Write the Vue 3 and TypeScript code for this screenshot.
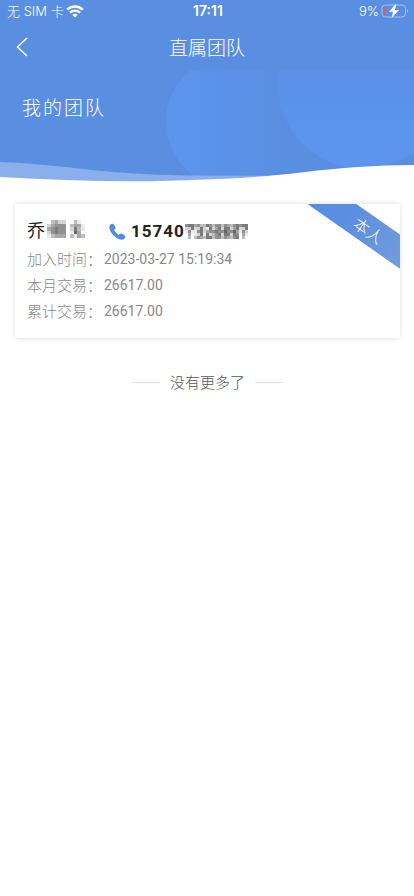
<script setup lang="ts">
interface Row {
  label: string
  value: string
}

interface Cell {
  x: number
  y: number
  fill: string
}

const rows: Row[] = [
  { label: '加入时间：', value: '2023-03-27 15:19:34' },
  { label: '本月交易：', value: '26617.00' },
  { label: '累计交易：', value: '26617.00' },
]

// Each character is the darkness of one mosaic cell, 0 (white) to 9 (dark).
const nameMask: string[] = [
  '0342200310',
  '2455503441',
  '4565502631',
  '2565501740',
  '1344403143',
]

const phoneMask: string[] = [
  '5664533653553543565660',
  '2262262162462662462260',
  '1511562455655755741520',
  '0401261623562662650410',
  '0303543663553543560300',
]

function toCells(mask: string[], size: number): Cell[] {
  return mask.flatMap((line, y) =>
    [...line].map((level, x) => {
      const tone = 255 - Number(level) * 22
      return { x: x * size, y: y * size, fill: `rgb(${tone}, ${tone}, ${tone})` }
    }),
  )
}

const nameCells = toCells(nameMask, 4)
const phoneCells = toCells(phoneMask, 3)
</script>

<template>
  <div class="page">
    <header class="hero">
      <svg class="backdrop" viewBox="0 0 414 182" preserveAspectRatio="none" aria-hidden="true">
        <defs>
          <linearGradient id="fade" x1="0" y1="0" x2="1" y2="0">
            <stop offset="0" stop-color="#5d95ed" />
            <stop offset="0.35" stop-color="#5c93ea" />
            <stop offset="0.9" stop-color="#598ee2" />
          </linearGradient>
          <linearGradient id="drop" x1="0" y1="0" x2="0" y2="1">
            <stop offset="0.4" stop-color="#5b91e8" />
            <stop offset="1" stop-color="#5d95ed" />
          </linearGradient>
          <clipPath id="banner"><rect x="0" y="70" width="414" height="112" /></clipPath>
        </defs>
        <rect width="414" height="182" fill="#598ee1" />
        <g clip-path="url(#banner)">
          <circle cx="232" cy="122" r="66" fill="url(#fade)" />
          <circle cx="363" cy="84" r="85" fill="url(#drop)" />
        </g>
        <path d="M0 162C65 164 100 175 195 175.500C235 176 260 176 285 175L285 182H0Z" fill="#8aafeb" />
        <path d="M0 177C70 181 135 183 205 179.500C245 178 275 176 305 172C340 168 375 165 414 165V183H0Z" fill="#fff" />
      </svg>

      <div class="status">
        <div class="carrier">
          <span>无 SIM 卡</span>
          <svg width="18" height="13" viewBox="0 0 18 13" aria-hidden="true">
            <g fill="none" stroke="#fff" stroke-width="2.500">
              <path d="M1.200 4.700C5.600 .5 12.400 .5 16.800 4.700" />
              <path d="M4 7.700C6.900 5 11.100 5 14 7.700" />
            </g>
            <path d="M6.300 9.800C7.800 8.400 10.200 8.400 11.700 9.800L9 12.600Z" fill="#fff" />
          </svg>
        </div>
        <time class="clock">17:11</time>
        <div class="power">
          <span>9%</span>
          <svg width="28" height="14" viewBox="0 0 28 14" aria-hidden="true">
            <rect x="1" y="1" width="23.500" height="12" rx="3.500" fill="none" stroke="#a5c3f1" />
            <path d="M26 5C27.300 5.500 27.300 8.500 26 9Z" fill="#a5c3f1" />
            <rect x="2.500" y="3" width="2" height="8" rx="1" fill="#e8525d" />
            <path d="M14.500 .3L8 7.800H12L10.700 13.700L18 6H13.800L15.500 .3Z" fill="#fff" />
          </svg>
        </div>
      </div>

      <nav class="bar">
        <button class="back" type="button" aria-label="返回">
          <svg width="12" height="20" viewBox="0 0 12 20" aria-hidden="true">
            <path d="M11 1L1.500 10L11 19" fill="none" stroke="#fff" stroke-width="1.500" />
          </svg>
        </button>
        <h1 class="title">直属团队</h1>
      </nav>

      <h2 class="heading">我的团队</h2>
    </header>

    <main class="content">
      <article class="card">
        <div class="ribbon">本人</div>
        <div class="person">
          <span class="name">乔</span>
          <svg class="name-mask" width="38" height="18" viewBox="0 0 40 20" preserveAspectRatio="none" shape-rendering="crispEdges" aria-hidden="true">
            <rect v-for="(c, i) in nameCells" :key="i" :x="c.x" :y="c.y" width="4" height="4" :fill="c.fill" />
          </svg>
          <svg class="handset" width="17" height="17" viewBox="0 0 17 17" aria-hidden="true">
            <path d="M1.200 1.700C2.500 .4 4.100 .3 4.900 1.500L6.300 4C6.800 5 6.500 5.700 5.700 6.400C5.100 7 5.300 7.600 6 8.500L8.500 11C9.400 11.800 10 11.900 10.600 11.300C11.300 10.500 12 10.200 13 10.700L15.500 12.200C16.700 13 16.600 14.400 15.300 15.700C13.700 17.200 11.600 16.900 9.200 15.700C5.500 13.700 3.100 11.200 1.300 7.900C0 5.300-.2 3.200 1.200 1.700Z" fill="#558be0" />
          </svg>
          <a class="phone" href="tel:15740">15740</a>
          <svg class="phone-mask" width="66" height="15" viewBox="0 0 66 15" shape-rendering="crispEdges" aria-hidden="true">
            <rect v-for="(c, i) in phoneCells" :key="i" :x="c.x" :y="c.y" width="3" height="3" :fill="c.fill" />
          </svg>
        </div>
        <dl class="details">
          <div v-for="row in rows" :key="row.label" class="detail">
            <dt>{{ row.label }}</dt>
            <dd>{{ row.value }}</dd>
          </div>
        </dl>
      </article>

      <p class="end">没有更多了</p>
    </main>
  </div>
</template>

<style>
body {
  background: #fff;
}
</style>

<style scoped>
.page {
  min-height: 100vh;
  background: #fff;
  font-family: "Noto Sans CJK SC", sans-serif;
  font-weight: 300;
}

.hero {
  position: relative;
  padding-bottom: 61px;
  color: #fff;
}

.backdrop {
  position: absolute;
  inset: 0;
  width: 100%;
  height: 100%;
}

.status {
  position: relative;
  display: grid;
  grid-template-columns: 1fr auto 1fr;
  align-items: center;
  height: 22px;
  padding: 0 5px 0 7px;
  font-family: Inter, "Noto Sans CJK SC", sans-serif;
  font-size: 13px;
  font-weight: 300;
  line-height: 22px;
}

.carrier,
.power {
  display: flex;
  align-items: center;
  gap: 2px;
}

.power {
  justify-content: flex-end;
}

.clock {
  font-size: 14px;
  font-weight: 600;
}

.bar {
  position: relative;
  display: grid;
  grid-template-columns: 44px 1fr 44px;
  align-items: center;
  height: 49px;
}

.back {
  display: flex;
  align-items: center;
  justify-content: center;
  height: 44px;
  padding: 0;
  border: 0;
  background: none;
}

.title {
  margin: 0;
  font-size: 19px;
  font-weight: 300;
  line-height: 28px;
  text-align: center;
}

.heading {
  position: relative;
  margin: 22px 22px 0;
  font-size: 19px;
  font-weight: 300;
  line-height: 28px;
  letter-spacing: 2px;
}

.content {
  padding: 22px 14px 0 15px;
}

.card {
  position: relative;
  overflow: hidden;
  padding: 14px 12px 15px;
  background: #fff;
  box-shadow: 0 0 5px rgba(0, 0, 0, 0.14);
}

.ribbon {
  position: absolute;
  top: 12px;
  right: -39px;
  width: 140px;
  background: linear-gradient(90deg, #598ee1 30%, #7ba0d8);
  color: #fff;
  font-size: 16px;
  line-height: 28px;
  text-align: center;
  transform: rotate(35deg);
}

.person {
  display: flex;
  align-items: center;
  height: 26px;
  color: #222;
}

.name {
  padding-bottom: 4px;
  font-size: 18px;
  font-weight: 400;
  line-height: 24px;
}

.name-mask {
  margin: 0 0 4px 2px;
}

.handset {
  margin-left: 24px;
}

.phone {
  margin-left: 5px;
  color: #222;
  font-family: Roboto, sans-serif;
  font-size: 17px;
  font-weight: 700;
  line-height: 24px;
  letter-spacing: 1px;
  text-decoration: none;
}

.details {
  margin: 1px 0 0;
  color: #888;
}

.detail {
  display: flex;
  align-items: center;
  height: 26px;
}

.detail dt {
  width: 77px;
  font-size: 15px;
  white-space: nowrap;
}

.detail dd {
  margin: 0;
  padding-top: 2px;
  font-family: Roboto, sans-serif;
  font-size: 14px;
  font-weight: 400;
}

.end {
  display: flex;
  align-items: center;
  justify-content: center;
  gap: 10px;
  margin: 32px 0 0;
  color: #555;
  font-size: 15px;
  font-weight: 300;
  line-height: 24px;
}

.end::before,
.end::after {
  content: "";
  width: 28px;
  height: 1px;
  background: #e2e2e2;
}
</style>
